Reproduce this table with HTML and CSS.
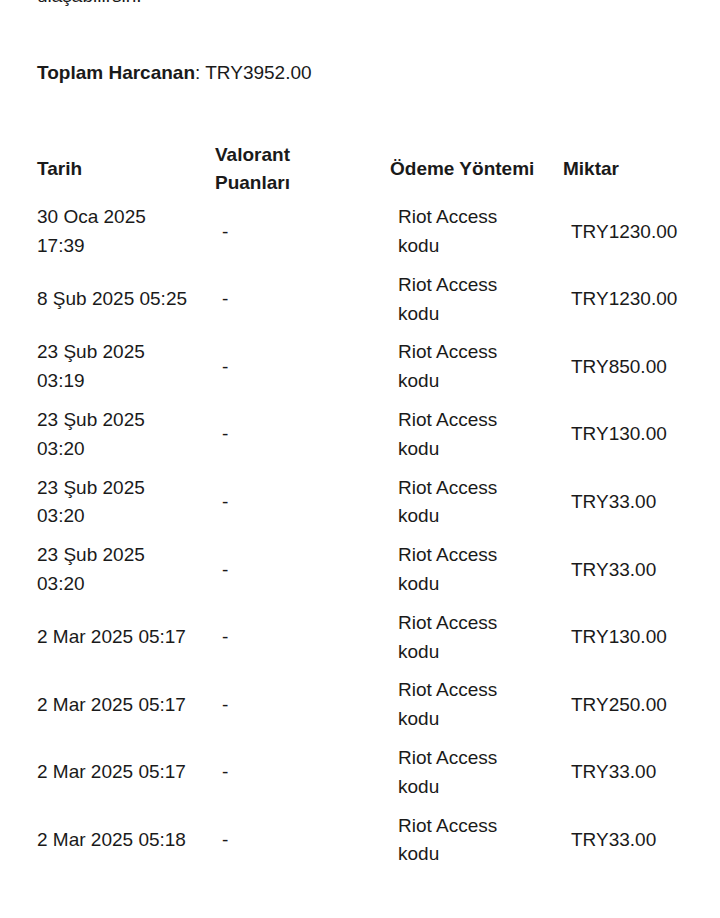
FILE: index.html
```html
<!DOCTYPE html>
<html lang="tr">
<head>
<meta charset="utf-8">
<title>Satın alma geçmişi</title>
<link rel="stylesheet" href="styles.css">
</head>
<body>
<main class="page">
  <p class="intro">ulaşabilirsin.</p>
  <p class="total"><strong>Toplam Harcanan</strong>: TRY3952.00</p>
  <table class="history">
    <colgroup>
      <col class="c-date">
      <col class="c-vp">
      <col class="c-method">
      <col class="c-amount">
    </colgroup>
    <thead>
      <tr>
        <th class="h-date">Tarih</th>
        <th class="h-vp">Valorant Puanları</th>
        <th class="h-method">Ödeme Yöntemi</th>
        <th class="h-amount">Miktar</th>
      </tr>
    </thead>
    <tbody>
      <tr><td class="d-date">30 Oca 2025 17:39</td><td class="d-vp">-</td><td class="d-method">Riot Access kodu</td><td class="d-amount">TRY1230.00</td></tr>
      <tr><td class="d-date">8 Şub 2025 05:25</td><td class="d-vp">-</td><td class="d-method">Riot Access kodu</td><td class="d-amount">TRY1230.00</td></tr>
      <tr><td class="d-date">23 Şub 2025 03:19</td><td class="d-vp">-</td><td class="d-method">Riot Access kodu</td><td class="d-amount">TRY850.00</td></tr>
      <tr><td class="d-date">23 Şub 2025 03:20</td><td class="d-vp">-</td><td class="d-method">Riot Access kodu</td><td class="d-amount">TRY130.00</td></tr>
      <tr><td class="d-date">23 Şub 2025 03:20</td><td class="d-vp">-</td><td class="d-method">Riot Access kodu</td><td class="d-amount">TRY33.00</td></tr>
      <tr><td class="d-date">23 Şub 2025 03:20</td><td class="d-vp">-</td><td class="d-method">Riot Access kodu</td><td class="d-amount">TRY33.00</td></tr>
      <tr><td class="d-date">2 Mar 2025 05:17</td><td class="d-vp">-</td><td class="d-method">Riot Access kodu</td><td class="d-amount">TRY130.00</td></tr>
      <tr><td class="d-date">2 Mar 2025 05:17</td><td class="d-vp">-</td><td class="d-method">Riot Access kodu</td><td class="d-amount">TRY250.00</td></tr>
      <tr><td class="d-date">2 Mar 2025 05:17</td><td class="d-vp">-</td><td class="d-method">Riot Access kodu</td><td class="d-amount">TRY33.00</td></tr>
      <tr><td class="d-date">2 Mar 2025 05:18</td><td class="d-vp">-</td><td class="d-method">Riot Access kodu</td><td class="d-amount">TRY33.00</td></tr>
    </tbody>
  </table>
</main>
</body>
</html>
```

FILE: styles.css
```css
html, body {
  margin: 0;
  padding: 0;
  background: #ffffff;
}

body {
  font-family: "Liberation Sans", Arial, sans-serif;
  font-size: 19px;
  line-height: 28.8px;
  color: #1a1a1a;
}

.page {
  padding: 0 37px;
}

.intro {
  margin: -17.6px 0 0;
}

.total {
  margin: 48px 0 0;
}

.total strong {
  font-weight: 700;
}

.history {
  margin-top: 52.6px;
  width: 646px;
  table-layout: fixed;
  border-collapse: collapse;
  border-spacing: 0;
}

.c-date { width: 178px; }
.c-vp { width: 175px; }
.c-method { width: 173px; }
.c-amount { width: 120px; }

.history th {
  font-weight: 700;
  text-align: left;
  vertical-align: middle;
  padding: 0 10px 0 0;
}

.history th.h-vp {
  padding-right: 30px;
}

.history td {
  text-align: left;
  vertical-align: middle;
  padding: 5px 0 5px 8px;
}

.history td.d-date {
  padding-left: 0;
  padding-right: 22px;
}

.history td.d-vp {
  padding-left: 7px;
}

.history td.d-method {
  padding-right: 30px;
}

.history td.d-amount {
  padding-right: 0;
}
```
